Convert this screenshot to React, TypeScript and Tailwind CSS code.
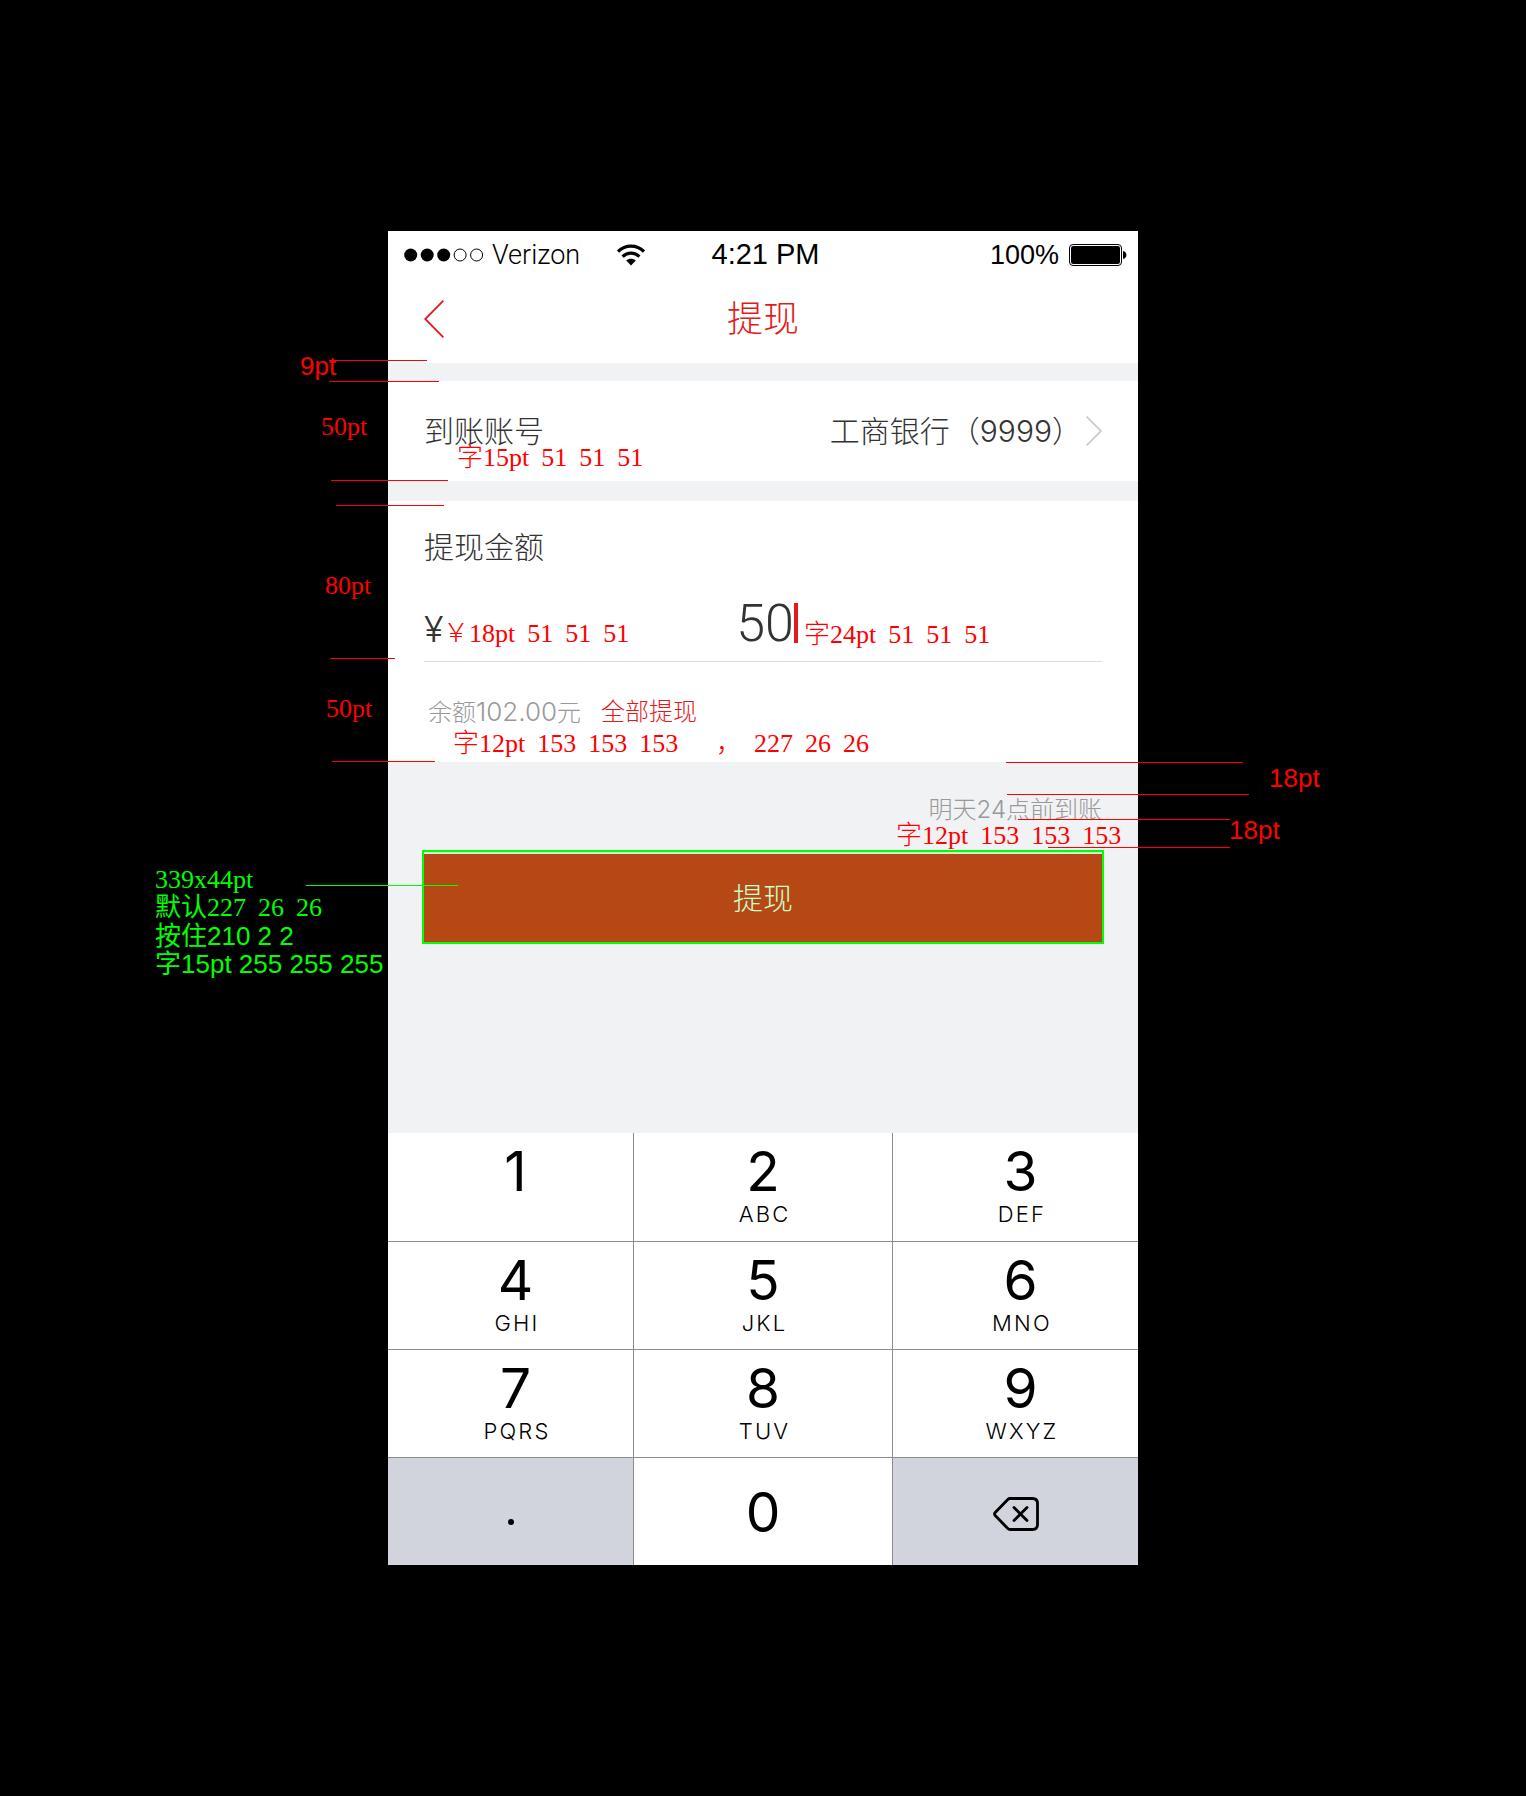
import React, { useState } from "react";

const keys = [
  { digit: "1", letters: "" },
  { digit: "2", letters: "ABC" },
  { digit: "3", letters: "DEF" },
  { digit: "4", letters: "GHI" },
  { digit: "5", letters: "JKL" },
  { digit: "6", letters: "MNO" },
  { digit: "7", letters: "PQRS" },
  { digit: "8", letters: "TUV" },
  { digit: "9", letters: "WXYZ" },
];

function SignalDots() {
  return (
    <svg width="80" height="14" viewBox="0 0 80 14" aria-hidden="true">
      <circle cx="6.7" cy="7" r="6.5" />
      <circle cx="23.2" cy="7" r="6.5" />
      <circle cx="39.7" cy="7" r="6.5" />
      <circle cx="56.1" cy="7" r="6" fill="none" stroke="#000" />
      <circle cx="72.6" cy="7" r="6" fill="none" stroke="#000" />
    </svg>
  );
}

function WifiIcon() {
  return (
    <svg width="28" height="22" viewBox="0 0 28 22" fill="none" stroke="#000" strokeWidth="3.2" aria-hidden="true">
      <path d="M1 7.6C8.4 0.4 19.6 0.4 27 7.6" />
      <path d="M5.6 12.6C10.4 8 17.6 8 22.4 12.6" />
      <path d="M14 21.4L9.2 16.6C11.8 14 16.2 14 18.8 16.6Z" fill="#000" stroke="none" />
    </svg>
  );
}

function BatteryIcon() {
  return (
    <svg width="58" height="22" viewBox="0 0 58 22" aria-hidden="true">
      <rect x="0.5" y="0.5" width="52" height="21" rx="3.5" fill="none" stroke="#000" />
      <rect x="2" y="2" width="49" height="18" rx="2.2" />
      <path d="M54 7C58.6 8 58.6 14 54 15Z" />
    </svg>
  );
}

function BackspaceIcon() {
  return (
    <svg width="46" height="34" viewBox="0 0 46 34" fill="none" stroke="#000" aria-hidden="true">
      <path
        d="M17 1.5H39.5Q44.5 1.5 44.5 6.5V27.5Q44.5 32.5 39.5 32.5H17Q15.8 32.5 14.8 31.5L2.2 18.6Q0.8 17 2.2 15.4L14.8 2.5Q15.8 1.5 17 1.5Z"
        strokeWidth="2.8"
      />
      <path d="M21 10.5L34 23.5M34 10.5L21 23.5" strokeWidth="2.8" strokeLinecap="round" />
    </svg>
  );
}

/* Measurement text whose values are set apart in evenly spaced groups. */
function SerifNote({ parts, className }: { parts: string[]; className: string }) {
  return (
    <p
      className={`absolute flex gap-3 whitespace-nowrap font-['Liberation_Serif','Noto_Sans_CJK_SC',serif] text-[26px] leading-7 font-light text-[#ff0000] ${className}`}
    >
      {parts.map((part, i) => (
        <span key={i}>{part}</span>
      ))}
    </p>
  );
}

function SansNote({ text, className }: { text: string; className: string }) {
  return (
    <p className={`absolute whitespace-nowrap font-['Liberation_Sans',sans-serif] text-[26px] leading-7 text-[#ff0000] ${className}`}>
      {text}
    </p>
  );
}

function Rule({ className }: { className: string }) {
  return <div className={`absolute h-px bg-[#ff0000] ${className}`} />;
}

function Annotations() {
  return (
    <div className="pointer-events-none absolute top-0 left-0">
      <Rule className="top-[129px] left-[-59px] w-[98px]" />
      <Rule className="top-[150px] left-[-59px] w-[110px]" />
      <Rule className="top-[249px] left-[-57px] w-[117px]" />
      <Rule className="top-[274px] left-[-52px] w-[108px]" />
      <Rule className="top-[427px] left-[-58px] w-[65px]" />
      <Rule className="top-[530px] left-[-56px] w-[103px]" />
      <Rule className="top-[531px] left-[618px] w-[237px]" />
      <Rule className="top-[563px] left-[619px] w-[242px]" />
      <Rule className="top-[588px] left-[630px] w-[212px]" />
      <Rule className="top-[616px] left-[660px] w-[182px]" />

      <SansNote text="9pt" className="top-[121px] left-[-88px]" />
      <SansNote text="18pt" className="top-[533px] left-[881px]" />
      <SansNote text="18pt" className="top-[585px] left-[841px]" />

      <SerifNote parts={["50pt"]} className="top-[182px] left-[-67px]" />
      <SerifNote parts={["80pt"]} className="top-[341px] left-[-63px]" />
      <SerifNote parts={["50pt"]} className="top-[464px] left-[-62px]" />
      <SerifNote parts={["字15pt", "51", "51", "51"]} className="top-[213px] left-[69px]" />
      <SerifNote parts={["￥18pt", "51", "51", "51"]} className="top-[389px] left-[55px]" />
      <SerifNote parts={["字24pt", "51", "51", "51"]} className="top-[390px] left-[416px]" />
      <SerifNote parts={["字12pt", "153", "153", "153"]} className="top-[499px] left-[65px]" />
      <SerifNote parts={["，", "227", "26", "26"]} className="top-[499px] left-[328px]" />
      <SerifNote parts={["字12pt", "153", "153", "153"]} className="top-[591px] left-[508px]" />

      <div className="absolute top-[654px] left-[-82px] h-px w-[152px] bg-[#00ff00]" />
      <div className="absolute top-[635px] left-[-233px] text-[26px] leading-7 font-normal whitespace-nowrap text-[#00ff00]">
        <div className="font-['Liberation_Serif','Noto_Sans_CJK_SC',serif]">
          <p>339x44pt</p>
          <p className="flex gap-3">
            <span>默认227</span>
            <span>26</span>
            <span>26</span>
          </p>
        </div>
        <div className="font-['Liberation_Sans','Noto_Sans_CJK_SC',sans-serif]">
          <p>按住210 2 2</p>
          <p>字15pt 255 255 255</p>
        </div>
      </div>
    </div>
  );
}

export default function App() {
  const [amount, setAmount] = useState("50");

  return (
    <div className="min-h-screen bg-black pt-[231px] pb-[231px]">
      <main className="relative mx-auto w-full max-w-[750px] bg-[#f1f2f4] font-['Inter','Noto_Sans_CJK_SC',sans-serif] font-light text-[#333333]">
        <header className="bg-white">
          <div className="grid h-11 grid-cols-[1fr_auto_1fr] items-center pt-0.5 pr-[11px] pl-4 text-black">
            <div className="flex items-center">
              <SignalDots />
              <span className="ml-2 font-['Roboto',sans-serif] text-[27px]">Verizon</span>
              <span className="ml-[37px]">
                <WifiIcon />
              </span>
            </div>
            <span className="font-['Liberation_Sans',sans-serif] text-[29px]">4:21 PM</span>
            <div className="flex items-center justify-end gap-2.5">
              <span className="font-['Liberation_Sans',sans-serif] text-[27px]">100%</span>
              <BatteryIcon />
            </div>
          </div>
          <div className="grid h-[88px] grid-cols-[1fr_auto_1fr] items-center px-9 text-[#e31a1a]">
            <button type="button" aria-label="返回" className="justify-self-start">
              <svg width="20" height="38" viewBox="0 0 20 38" fill="none" stroke="currentColor" strokeWidth="1.8" aria-hidden="true">
                <path d="M19.4 0.6L1.2 19L19.4 37.4" />
              </svg>
            </button>
            <h1 className="text-[36px] leading-none">提现</h1>
          </div>
        </header>

        <button type="button" className="mt-[18px] flex h-[100px] w-full items-center justify-between bg-white px-9 text-[30px]">
          <span>到账账号</span>
          <span className="flex items-center gap-1">
            工商银行（9999）
            <svg width="16" height="30" viewBox="0 0 16 30" fill="none" stroke="#cccccc" strokeWidth="1.8" aria-hidden="true">
              <path d="M0.6 0.6L15 15L0.6 29.4" />
            </svg>
          </span>
        </button>

        <section className="mt-5 bg-white px-9 pt-6">
          <label htmlFor="amount" className="block text-[30px] leading-[44px]">
            提现金额
          </label>
          <div className="grid h-[93px] grid-cols-[1fr_auto_1fr] items-center border-b border-[#dcdcdc] pt-4">
            <span className="pt-3 text-[36px] leading-none">¥</span>
            <span className="flex items-center pl-2">
              <input
                id="amount"
                value={amount}
                onChange={(e) => setAmount(e.target.value)}
                inputMode="decimal"
                className="field-sizing-content bg-transparent font-['Roboto',sans-serif] text-[52px] leading-none outline-none"
              />
              <span className="h-10 w-1 bg-[#e31a1a]" />
            </span>
          </div>
          <div className="flex h-[100px] items-center gap-5 pl-1 text-2xl">
            <span className="text-[#999999]">
              余额<span className="text-[26px]">102.00</span>元
            </span>
            <button type="button" className="text-[#e31a1a]">
              全部提现
            </button>
          </div>
        </section>

        <section className="px-[34px] pt-9 pb-[189px]">
          <p className="pr-0.5 text-right text-2xl leading-6 text-[#999999]">明天24点前到账</p>
          <button
            type="button"
            className="mt-7 block w-full border-2 border-[#00ff00] bg-[#c8f7cc] pt-0.5 text-[30px] text-[#c8ffc8]"
          >
            <span className="flex h-[88px] items-center justify-center bg-[#b54814]">提现</span>
          </button>
        </section>

        <div className="grid grid-cols-[245fr_258fr_245fr] grid-rows-[108px_repeat(3,107px)] gap-px bg-[#8c8c8c] font-normal text-black">
          {keys.map(({ digit, letters }, i) => (
            <button
              key={digit}
              type="button"
              className={`flex flex-col items-center gap-[3px] bg-white pt-2.5 ${i % 3 === 1 ? "" : "pl-2.5"}`}
            >
              <span className="text-[55px] leading-[56px]">{digit}</span>
              <span className="pl-[3px] text-[22px] leading-6 font-[350] tracking-widest">{letters}</span>
            </button>
          ))}
          <button type="button" aria-label="小数点" className="flex items-center justify-center bg-[#d1d4dc] pt-5">
            <span className="size-1.5 rounded-full bg-black" />
          </button>
          <button type="button" className="bg-white text-[55px] leading-[56px]">
            0
          </button>
          <button type="button" aria-label="删除" className="flex items-center justify-center bg-[#d1d4dc] pt-1">
            <BackspaceIcon />
          </button>
        </div>

        <Annotations />
      </main>
    </div>
  );
}
